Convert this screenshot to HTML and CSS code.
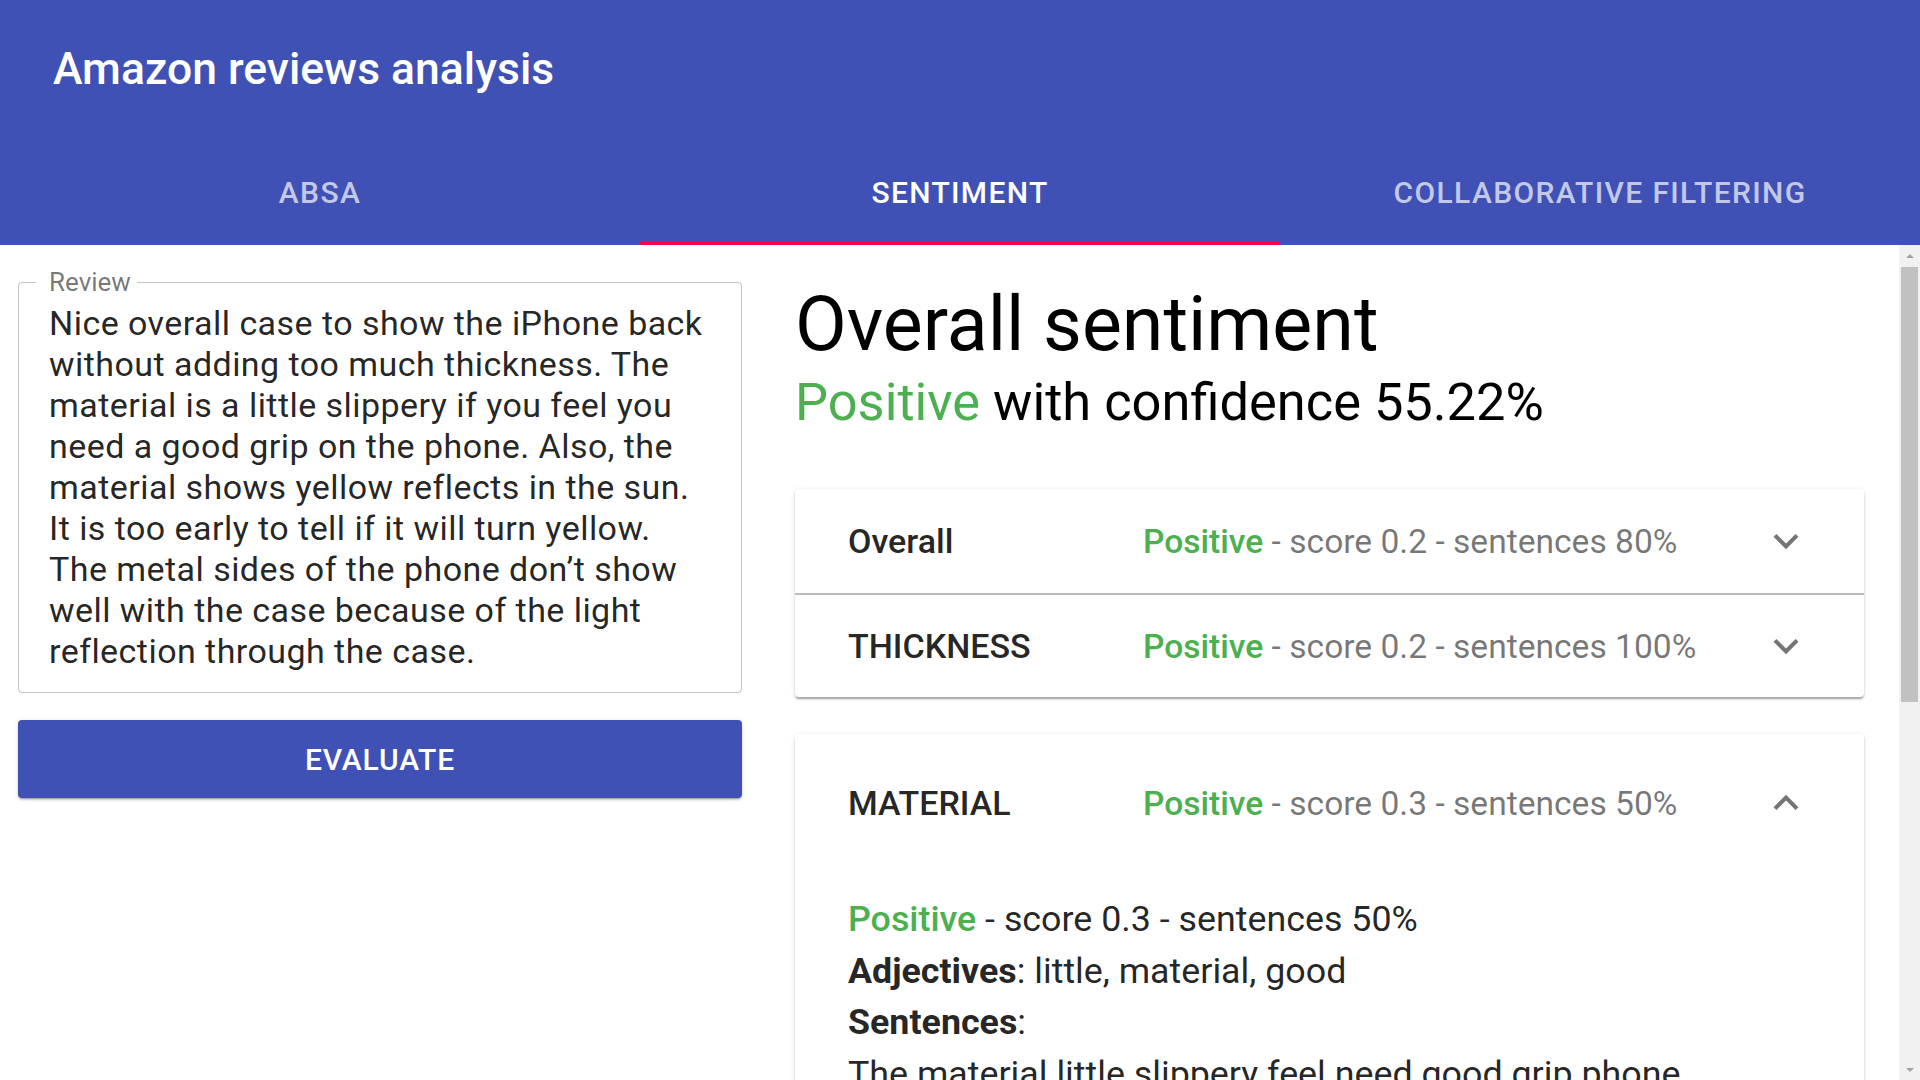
FILE: index.html
```html
<!DOCTYPE html>
<html lang="en">
<head>
<meta charset="utf-8">
<title>Amazon reviews analysis</title>
<link rel="stylesheet" href="styles.css">
</head>
<body>
<header class="appbar">
  <div class="toolbar"><h1 class="title">Amazon reviews analysis</h1></div>
  <nav class="tabs">
    <div class="tab">ABSA</div>
    <div class="tab tab-active">SENTIMENT</div>
    <div class="tab">COLLABORATIVE FILTERING</div>
  </nav>
</header>
<main class="content">
  <div class="page">
    <section class="left">
      <fieldset class="review">
        <legend>Review</legend>
        <div class="review-text">Nice overall case to show the iPhone back without adding too much thickness. The material is a little slippery if you feel you need a good grip on the phone. Also, the material shows yellow reflects in the sun. It is too early to tell if it will turn yellow. The metal sides of the phone don’t show well with the case because of the light reflection through the case.</div>
      </fieldset>
      <button class="evaluate" type="button">EVALUATE</button>
    </section>
    <section class="right">
      <h2 class="overall-title">Overall sentiment</h2>
      <p class="overall-sub"><span class="pos">Positive</span> with confidence 55.22%</p>

      <div class="panel-group">
        <div class="panel-row">
          <div class="aspect">Overall</div>
          <div class="status"><span class="pos strong">Positive</span> - score 0.2 - sentences 80%</div>
          <svg class="chev" viewBox="0 0 24 24"><path d="M16.59 8.59L12 13.17 7.41 8.59 6 10l6 6 6-6z"/></svg>
        </div>
        <div class="panel-row">
          <div class="aspect">THICKNESS</div>
          <div class="status"><span class="pos strong">Positive</span> - score 0.2 - sentences 100%</div>
          <svg class="chev" viewBox="0 0 24 24"><path d="M16.59 8.59L12 13.17 7.41 8.59 6 10l6 6 6-6z"/></svg>
        </div>
      </div>

      <div class="panel-group expanded">
        <div class="panel-row">
          <div class="aspect">MATERIAL</div>
          <div class="status"><span class="pos strong">Positive</span> - score 0.3 - sentences 50%</div>
          <svg class="chev" viewBox="0 0 24 24"><path d="M12 8l-6 6 1.41 1.41L12 10.83l4.59 4.58L18 14z"/></svg>
        </div>
        <div class="details">
          <p><span class="pos strong">Positive</span> - score 0.3 - sentences 50%</p>
          <p><b>Adjectives</b>: little, material, good</p>
          <p><b>Sentences</b>:</p>
          <p>The material little slippery feel need good grip phone</p>
        </div>
      </div>
    </section>
  </div>
  <div class="scrollbar" aria-hidden="true">
    <div class="sb-button"><span class="arrow-up"></span></div>
    <div class="sb-track"><div class="sb-thumb"></div></div>
    <div class="sb-button"><span class="arrow-down"></span></div>
  </div>
</main>
</body>
</html>
```
FILE: styles.css
```css
* {
  box-sizing: border-box;
}

html,
body {
  margin: 0;
  height: 100%;
}

body {
  font-family: Roboto, "Liberation Sans", Arial, sans-serif;
  display: flex;
  flex-direction: column;
  overflow: hidden;
  background: #fff;
  color: rgba(0, 0, 0, 0.87);
}

/* ---------- App bar ---------- */
.appbar {
  flex: none;
  background: #3f51b5;
  color: #fff;
}

.toolbar {
  height: 140px;
  display: flex;
  align-items: center;
  padding-left: 53px;
}

.title {
  margin: 0;
  font-size: 44.5px;
  font-weight: 500;
  line-height: 1.2;
}

.tabs {
  display: flex;
  height: 105px;
}

.tab {
  flex: 1;
  display: flex;
  align-items: center;
  justify-content: center;
  font-size: 30px;
  font-weight: 500;
  letter-spacing: 0.045em;
  color: rgba(255, 255, 255, 0.7);
}

.tab-active {
  color: #fff;
  box-shadow: inset 0 -4px 0 #f50057;
}

/* ---------- Content area ---------- */
.content {
  flex: 1;
  min-height: 0;
  display: flex;
  overflow: hidden;
}

.page {
  flex: 1;
  min-width: 0;
  display: flex;
  align-items: flex-start;
  overflow: hidden;
}

/* drawn scrollbar */
.scrollbar {
  flex: none;
  width: 21px;
  display: flex;
  flex-direction: column;
  background: #f1f1f1;
}

.sb-button {
  flex: none;
  height: 21px;
  display: flex;
  align-items: center;
  justify-content: center;
}

.arrow-up {
  width: 0;
  height: 0;
  border-left: 4px solid transparent;
  border-right: 4px solid transparent;
  border-bottom: 4px solid #a3a3a3;
}

.arrow-down {
  width: 0;
  height: 0;
  border-left: 4px solid transparent;
  border-right: 4px solid transparent;
  border-top: 4px solid #a3a3a3;
}

.sb-track {
  flex: 1;
  padding: 1px 2px 0;
}

.sb-thumb {
  height: 435px;
  background: #c1c1c1;
}

/* ---------- Left column ---------- */
.left {
  flex: none;
  width: 724px;
  margin-left: 18px;
  padding-top: 24px;
}

.review {
  margin: 0;
  min-width: 0;
  padding: 8px 30px 20px;
  border: 1px solid rgba(0, 0, 0, 0.23);
  border-radius: 4px;
}

.review legend {
  font-size: 26px;
  line-height: 26px;
  color: rgba(0, 0, 0, 0.54);
  margin-left: -13px;
  padding: 0 6px 0 13px;
}

.review-text {
  font-size: 34px;
  line-height: 41px;
  letter-spacing: 0.45px;
  color: rgba(0, 0, 0, 0.87);
}

.evaluate {
  display: block;
  width: 100%;
  height: 78px;
  margin-top: 27px;
  border: 0;
  border-radius: 4px;
  background: #3f51b5;
  color: #fff;
  font-family: inherit;
  font-size: 30px;
  font-weight: 500;
  letter-spacing: 0.02857em;
  box-shadow: 0 3px 1px -2px rgba(0, 0, 0, 0.2), 0 2px 2px 0 rgba(0, 0, 0, 0.14),
    0 1px 5px 0 rgba(0, 0, 0, 0.12);
}

/* ---------- Right column ---------- */
.right {
  flex: none;
  width: 1069px;
  margin-left: 53px;
  padding-top: 34px;
  padding-bottom: 35px;
}

.overall-title {
  margin: 0;
  font-size: 75.3px;
  font-weight: 400;
  line-height: 90px;
  color: #000;
}

.overall-sub {
  margin: 2px 0 0;
  font-size: 52.4px;
  line-height: 62px;
  color: #000;
}

.pos {
  color: #4caf50;
}

.strong {
  font-weight: 500;
}

.panel-group {
  margin-top: 56px;
  background: #fff;
  border-radius: 4px;
  box-shadow: 0 3px 2px -1px rgba(0, 0, 0, 0.2), 0 2px 2px 0 rgba(0, 0, 0, 0.14),
    0 1px 5px 0 rgba(0, 0, 0, 0.12);
}

.panel-group + .panel-group {
  margin-top: 37px;
}

.panel-row {
  display: flex;
  align-items: center;
  height: 104px;
  padding: 0 53px;
}

.panel-row + .panel-row {
  border-top: 2px solid #bdbdbd;
}

.aspect {
  flex: none;
  width: 295px;
  font-size: 34px;
  font-weight: 500;
  color: rgba(0, 0, 0, 0.87);
}

.status {
  flex: 1;
  font-size: 33.6px;
  color: rgba(0, 0, 0, 0.54);
}

.chev {
  flex: none;
  width: 50px;
  height: 50px;
  fill: rgba(0, 0, 0, 0.54);
}

.expanded .panel-row {
  height: 138px;
}

.details {
  padding: 22px 53px 24px;
  font-size: 35.8px;
  line-height: 51.5px;
  color: rgba(0, 0, 0, 0.87);
}

.details p {
  margin: 0;
}

.details b {
  font-weight: 700;
}
```
